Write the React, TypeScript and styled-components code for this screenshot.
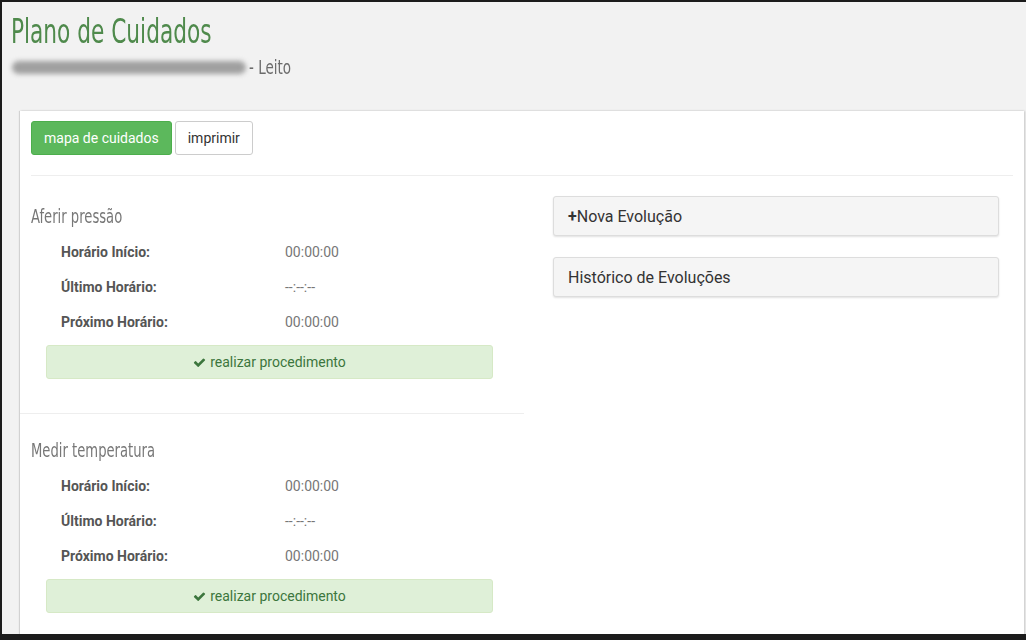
import * as React from "react"
import styled, { createGlobalStyle } from "styled-components"

const GlobalStyle = createGlobalStyle`
  html, body {
    margin: 0;
    padding: 0;
    background: #1c1c1c;
  }
  * {
    box-sizing: border-box;
  }
`

const condensed = `"Liberation Sans Narrow", "DejaVu Sans Condensed", "DejaVu Sans", sans-serif`

const Frame = styled.div`
  height: 640px;
  padding: 2px 0 6px 2px;
  overflow: hidden;
`

const Page = styled.div`
  height: 632px;
  background: #f2f2f2;
  overflow: hidden;
  font-family: Roboto, "Liberation Sans", sans-serif;
`

const Header = styled.header`
  padding: 13px 9px 0;
  height: 109px;
`

// no Oswald available, so the condensed face is squeezed a bit further
const Narrow = styled.span<{ $squeeze: number }>`
  display: inline-block;
  white-space: nowrap;
  transform: scaleX(${p => p.$squeeze});
  transform-origin: left center;
`

const Title = styled.h1`
  margin: 0;
  font-family: ${condensed};
  font-stretch: condensed;
  font-weight: normal;
  font-size: 33px;
  line-height: 34px;
  color: #4f8a4c;
`

const Subtitle = styled.div`
  display: flex;
  align-items: center;
  gap: 3px;
  margin-top: 6px;
  font-family: ${condensed};
  font-stretch: condensed;
  font-size: 20px;
  line-height: 24px;
  color: #6b6b6b;
`

const Blurred = styled.span`
  display: inline-block;
  width: 234px;
  height: 13px;
  margin-left: 1px;
  border-radius: 7px;
  background: #a0a0a0;
  filter: blur(2.5px);
`

const Panel = styled.main`
  margin-left: 18px;
  width: 1004px;
  height: 530px;
  background: #fff;
  box-shadow: -1px 0 1px rgba(0, 0, 0, 0.12), 1px 0 2px rgba(0, 0, 0, 0.18);
`

const Toolbar = styled.div`
  display: flex;
  gap: 3px;
  padding: 10px 11px 0;
`

const Button = styled.button<{ $primary?: boolean }>`
  height: 34px;
  padding: 0 12px;
  border-radius: 3px;
  font-family: Roboto, "Liberation Sans", sans-serif;
  font-size: 14px;
  cursor: pointer;
  border: 1px solid ${p => (p.$primary ? "#4cae4c" : "#cccccc")};
  background: ${p => (p.$primary ? "#5cb85c" : "#ffffff")};
  color: ${p => (p.$primary ? "#ffffff" : "#333333")};
`

const Rule = styled.hr`
  margin: 20px 11px 4px;
  border: 0;
  border-top: 1px solid #eeeeee;
`

const Columns = styled.div`
  display: grid;
  grid-template-columns: 504px 446px;
  column-gap: 29px;
`

const Section = styled.section`
  padding: 26px 0 34px;
  border-bottom: 1px solid #eeeeee;
`

const SectionTitle = styled.h3`
  margin: 0 0 8px 11px;
  font-family: ${condensed};
  font-stretch: condensed;
  font-weight: normal;
  font-size: 19px;
  line-height: 20px;
  color: #777777;
`

const Row = styled.div`
  display: grid;
  grid-template-columns: 224px 1fr;
  height: 35px;
  align-items: center;
  padding-left: 41px;
  font-size: 14px;
`

const Label = styled.span`
  font-weight: bold;
  color: #555555;
`

const Value = styled.span`
  color: #777777;
`

const Alert = styled.div`
  margin: 6px 0 0 26px;
  width: 447px;
  height: 34px;
  display: flex;
  align-items: center;
  justify-content: center;
  gap: 4px;
  background: #dff0d8;
  border: 1px solid #d6e9c6;
  border-radius: 3px;
  color: #3c763d;
  font-size: 14px;
`

const Side = styled.div`
  padding-top: 16px;
  display: flex;
  flex-direction: column;
  gap: 21px;
`

const SidePanel = styled.div`
  height: 40px;
  display: flex;
  align-items: center;
  padding: 0 14px;
  background: #f5f5f5;
  border: 1px solid #dddddd;
  border-radius: 3px;
  box-shadow: 0 1px 2px rgba(0, 0, 0, 0.12);
  font-size: 16px;
  color: #333333;

  b {
    font-weight: bold;
  }
`

const CheckIcon = () => (
  <svg width="13" height="13" viewBox="0 0 1792 1792" fill="#3c763d">
    <path d="M1671 566q0 40-28 68l-724 724-136 136q-28 28-68 28t-68-28l-136-136-362-362q-28-28-28-68t28-68l136-136q28-28 68-28t68 28l294 295 656-657q28-28 68-28t68 28l136 136q28 28 28 68z" />
  </svg>
)

type Care = {
  key: string
  title: string
  start: string
  last: string
  next: string
}

const cares: Care[] = [
  { key: "pressao", title: "Aferir pressão", start: "00:00:00", last: "--:--:--", next: "00:00:00" },
  { key: "temperatura", title: "Medir temperatura", start: "00:00:00", last: "--:--:--", next: "00:00:00" },
]

const CareSection = ({ care }: { care: Care }) => (
  <Section>
    <SectionTitle>
      <Narrow $squeeze={0.77}>{care.title}</Narrow>
    </SectionTitle>
    <Row>
      <Label>Horário Início:</Label>
      <Value>{care.start}</Value>
    </Row>
    <Row>
      <Label>Último Horário:</Label>
      <Value>{care.last}</Value>
    </Row>
    <Row>
      <Label>Próximo Horário:</Label>
      <Value>{care.next}</Value>
    </Row>
    <Alert>
      <CheckIcon />
      realizar procedimento
    </Alert>
  </Section>
)

export default function App() {
  return (
    <Frame>
      <GlobalStyle />
      <Page>
        <Header>
          <Title>
            <Narrow $squeeze={0.73}>Plano de Cuidados</Narrow>
          </Title>
          <Subtitle>
            <Blurred />
            <Narrow $squeeze={0.75}>- Leito</Narrow>
          </Subtitle>
        </Header>
        <Panel>
          <Toolbar>
            <Button $primary>mapa de cuidados</Button>
            <Button>imprimir</Button>
          </Toolbar>
          <Rule />
          <Columns>
            <div>
              {cares.map(care => (
                <CareSection key={care.key} care={care} />
              ))}
            </div>
            <Side>
              <SidePanel>
                <b>+</b>Nova Evolução
              </SidePanel>
              <SidePanel>Histórico de Evoluções</SidePanel>
            </Side>
          </Columns>
        </Panel>
      </Page>
    </Frame>
  )
}
